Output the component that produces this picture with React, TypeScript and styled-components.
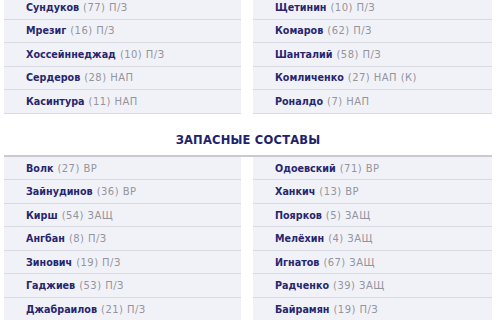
import React from 'react';
import styled, { createGlobalStyle } from 'styled-components';

type Player = { name: string; num: number; pos: string };

const mainHome: Player[] = [
  { name: 'Сундуков', num: 77, pos: 'П/З' },
  { name: 'Мрезиг', num: 16, pos: 'П/З' },
  { name: 'Хоссейннеджад', num: 10, pos: 'П/З' },
  { name: 'Сердеров', num: 28, pos: 'НАП' },
  { name: 'Касинтура', num: 11, pos: 'НАП' },
];

const mainAway: Player[] = [
  { name: 'Щетинин', num: 10, pos: 'П/З' },
  { name: 'Комаров', num: 62, pos: 'П/З' },
  { name: 'Шанталий', num: 58, pos: 'П/З' },
  { name: 'Комличенко', num: 27, pos: 'НАП (К)' },
  { name: 'Роналдо', num: 7, pos: 'НАП' },
];

const subsHome: Player[] = [
  { name: 'Волк', num: 27, pos: 'ВР' },
  { name: 'Зайнудинов', num: 36, pos: 'ВР' },
  { name: 'Кирш', num: 54, pos: 'ЗАЩ' },
  { name: 'Ангбан', num: 8, pos: 'П/З' },
  { name: 'Зинович', num: 19, pos: 'П/З' },
  { name: 'Гаджиев', num: 53, pos: 'П/З' },
  { name: 'Джабраилов', num: 21, pos: 'П/З' },
];

const subsAway: Player[] = [
  { name: 'Одоевский', num: 71, pos: 'ВР' },
  { name: 'Ханкич', num: 13, pos: 'ВР' },
  { name: 'Поярков', num: 5, pos: 'ЗАЩ' },
  { name: 'Мелёхин', num: 4, pos: 'ЗАЩ' },
  { name: 'Игнатов', num: 67, pos: 'ЗАЩ' },
  { name: 'Радченко', num: 39, pos: 'ЗАЩ' },
  { name: 'Байрамян', num: 19, pos: 'П/З' },
];

const GlobalStyle = createGlobalStyle`
  html, body {
    margin: 0;
    padding: 0;
    background: #ffffff;
    overflow: hidden;
  }
  body {
    font-family: "DejaVu Sans", "Noto Sans", sans-serif;
  }
`;

const Page = styled.div`
  width: 500px;
  height: 320px;
  overflow: hidden;
`;

const Inner = styled.div`
  margin-top: -4px;
  padding: 0 8px 0 4px;
`;

const Columns = styled.div<{ $top?: boolean }>`
  display: grid;
  grid-template-columns: 237px 239px;
  column-gap: 12px;
  border-top: ${(p) => (p.$top ? '2px solid #c9c9cf' : 'none')};
`;

const List = styled.div`
  display: flex;
  flex-direction: column;
`;

const Row = styled.div`
  box-sizing: border-box;
  height: 23.55px;
  display: flex;
  align-items: center;
  padding-left: 22px;
  background: #f1f2f7;
  border-bottom: 1px solid #dadbe2;
  white-space: nowrap;
`;

const Name = styled.span`
  font-size: 9.6px;
  font-weight: 700;
  color: #27266e;
`;

const Meta = styled.span`
  font-size: 10px;
  color: #94949d;
  margin-left: 4px;
  letter-spacing: 0.45px;
`;

const Title = styled.h2`
  margin: 19px 0 8px;
  text-align: center;
  font-size: 11.5px;
  font-weight: 700;
  color: #22226a;
  letter-spacing: 0.2px;
`;

const Lineup = ({ players }: { players: Player[] }) => (
  <List>
    {players.map((p) => (
      <Row key={p.name}>
        <Name>{p.name}</Name>
        <Meta>
          ({p.num}) {p.pos}
        </Meta>
      </Row>
    ))}
  </List>
);

export default function App() {
  return (
    <Page>
      <GlobalStyle />
      <Inner>
        <Columns>
          <Lineup players={mainHome} />
          <Lineup players={mainAway} />
        </Columns>
        <Title>ЗАПАСНЫЕ СОСТАВЫ</Title>
        <Columns $top>
          <Lineup players={subsHome} />
          <Lineup players={subsAway} />
        </Columns>
      </Inner>
    </Page>
  );
}
